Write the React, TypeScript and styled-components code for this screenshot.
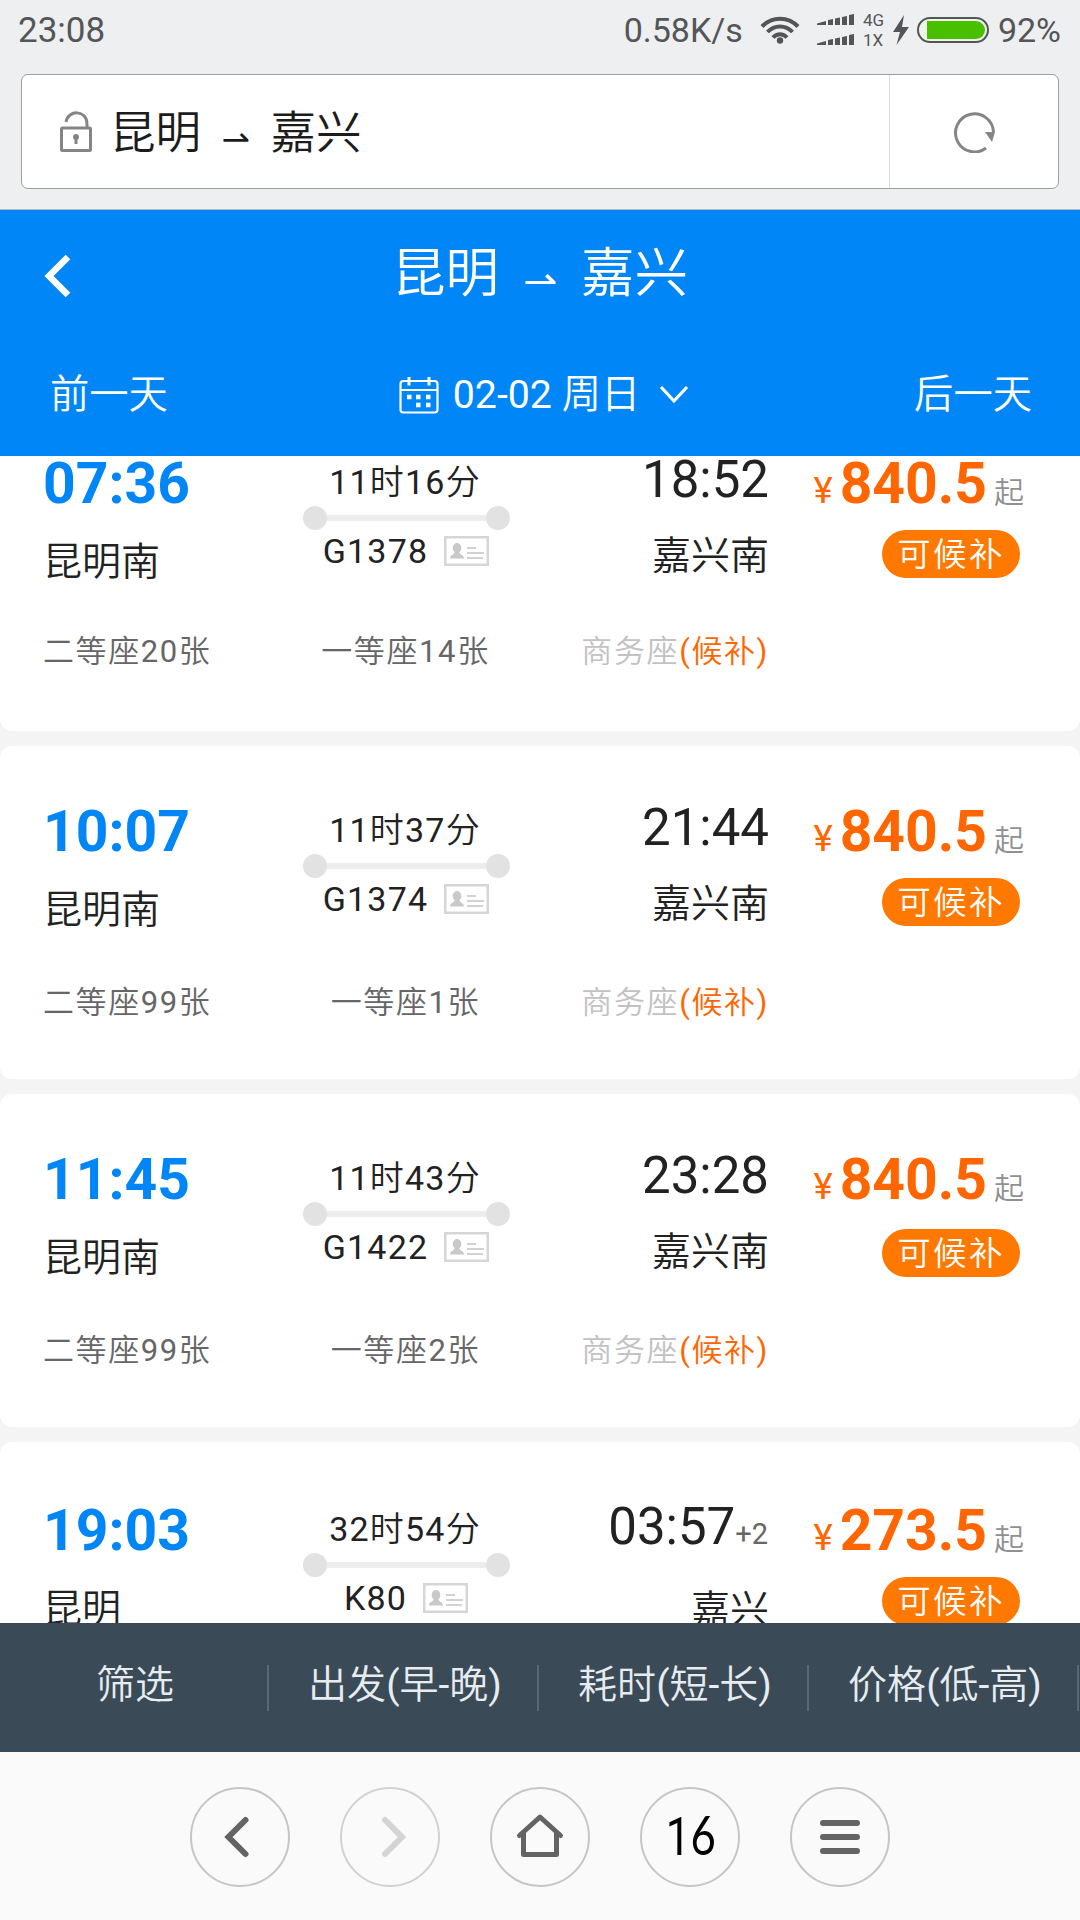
import React from "react";
import styled, { createGlobalStyle } from "styled-components";

const sans = `Roboto, "Noto Sans CJK SC", sans-serif`;

const GlobalStyle = createGlobalStyle`
  * { box-sizing: border-box; }
  body { margin: 0; background: #f4f4f4; font-family: ${sans}; color: #222; }
`;

const Screen = styled.div`
  width: 1080px;
  height: 1920px;
  display: flex;
  flex-direction: column;
  overflow: hidden;
`;

/* Chinese glyphs are set one step lighter than the Latin digits beside them. */
const Han = styled.span`
  font-weight: 350;
`;
const Mixed = ({ text }: { text: string }) => (
  <span>
    {text.split(/([\u4e00-\u9fff]+)/).filter(Boolean).map((part, i) =>
      /[\u4e00-\u9fff]/.test(part) ? <Han key={i}>{part}</Han> : part
    )}
  </span>
);

/* ---------- status bar ---------- */
const BrowserTop = styled.div`
  height: 210px;
  flex: none;
  background: #eeeff1;
  border-bottom: 1px solid #b4bac2;
  padding: 0 21px;
`;
const StatusBar = styled.div`
  height: 74px;
  display: flex;
  align-items: flex-start;
  padding-top: 10px;
  margin: 0 -2px 0 -3px;
  color: #545557;
`;
const StatusText = styled.span<{ $ml?: number; $size?: number }>`
  font-size: ${(p) => p.$size ?? 34}px;
  line-height: 41px;
  margin-left: ${(p) => p.$ml ?? 0}px;
  white-space: nowrap;
`;
const StatusRight = styled.div`
  margin-left: auto;
  display: flex;
  align-items: flex-start;
`;
const NetLabels = styled.div`
  display: flex;
  flex-direction: column;
  width: 30px;
  font-size: 17px;
  line-height: 20px;
`;

/* ---------- address bar ---------- */
const AddressBar = styled.div`
  height: 115px;
  display: flex;
  background: #fff;
  border: 1px solid #9b9d9f;
  border-radius: 7px;
`;
const Address = styled.div`
  flex: 1;
  display: flex;
  align-items: center;
  padding-left: 38px;
  font-size: 45.5px;
  line-height: 60px;
  color: #1c1c1c;
`;
const RefreshBox = styled.div`
  width: 169px;
  display: flex;
  align-items: center;
  justify-content: center;
  border-left: 1px solid #dcdcdc;
`;
const Route = styled.span`
  display: flex;
  align-items: flex-start;
  margin-left: 18px;
  padding-top: 5px;
  height: 65px;
`;
const Harpoon = styled.span<{ $size: number; $gap: number; $drop: number }>`
  font-family: "DejaVu Sans", sans-serif;
  font-size: ${(p) => p.$size}px;
  margin: ${(p) => p.$drop}px ${(p) => p.$gap}px 0;
`;

/* ---------- page header ---------- */
const Header = styled.header`
  height: 246px;
  flex: none;
  background: #0086f6;
  color: #fff;
  display: flex;
  flex-direction: column;
`;
const TitleRow = styled.div`
  height: 126px;
  display: grid;
  grid-template-columns: 90px 1fr 90px;
  align-items: center;
  font-size: 53.5px;
  line-height: 70px;
`;
const TitleText = styled.div`
  display: flex;
  justify-content: center;
  padding-top: 9px;
  font-weight: 350;
`;
const BackButton = styled.div`
  padding: 6px 0 0 44px;
  display: flex;
`;
const DateRow = styled.div`
  height: 120px;
  display: flex;
  align-items: center;
  justify-content: space-between;
  padding: 0 48px 2px 50px;
  font-size: 39.3px;
  line-height: 50px;
`;
const DatePick = styled.div`
  display: flex;
  align-items: center;
  margin-left: 6px;
`;
const DateLabel = styled.span`
  margin: 0 19px 0 14px;
`;

/* ---------- train list ---------- */
const List = styled.main`
  flex: 1;
  overflow: hidden;
  background: #f4f4f4;
`;
const Cards = styled.div`
  margin-top: -58px;
  display: flex;
  flex-direction: column;
  gap: 15px;
`;
const Card = styled.article<{ $shift: number }>`
  height: 333px;
  flex: none;
  background: #fff;
  border-radius: 12px;
  padding: ${(p) => 56 + p.$shift}px 56px 0 43px;
  display: flex;
  flex-direction: column;
`;
const Columns = styled.div`
  height: 130px;
  display: grid;
  grid-template-columns: 202px 320px 204px 1fr;
`;
const Col = styled.div<{ $align: string; $top?: number }>`
  display: flex;
  flex-direction: column;
  align-items: ${(p) => p.$align};
  padding-top: ${(p) => p.$top ?? 0}px;
  white-space: nowrap;
`;
const DepartTime = styled.span`
  font-size: 57px;
  font-weight: 700;
  line-height: 56px;
  color: #0086f6;
`;
const Station = styled.span<{ $mt: number }>`
  font-size: 39px;
  font-weight: 350;
  line-height: 46px;
  margin-top: ${(p) => p.$mt}px;
`;
const MidText = styled.span`
  font-size: 34px;
  letter-spacing: 1.2px;
  line-height: 40px;
`;
const Track = styled.div`
  width: 207px;
  height: 24px;
  display: flex;
  align-items: center;
  margin: 4px 0 1px 3px;
`;
const Dot = styled.i`
  width: 24px;
  height: 24px;
  border-radius: 50%;
  background: #e2e2e2;
`;
const Rail = styled.i`
  flex: 1;
  height: 6px;
  background: #ededed;
`;
const TrainNo = styled.div`
  display: flex;
  align-items: center;
  gap: 16px;
  padding-left: 2px;
`;
const ArriveTime = styled.span`
  font-size: 51px;
  line-height: 52px;
`;
const PlusDays = styled.small`
  font-size: 29px;
  color: #666;
  margin-right: 1px;
`;
const Price = styled.div`
  height: 56px;
  font-size: 57px;
  font-weight: 700;
  line-height: 56px;
  color: #ff6600;
`;
const Yen = styled.span`
  font-size: 36.5px;
  font-weight: 400;
  margin-right: 7px;
`;
const From = styled.span`
  font-size: 30px;
  font-weight: 350;
  color: #909090;
  margin-left: 7px;
`;
const Badge = styled.span<{ $mt: number }>`
  height: 48px;
  width: 138px;
  margin: ${(p) => p.$mt}px 4px 0 0;
  border-radius: 24px;
  background: #ff7800;
  color: #fff;
  font-size: 33.5px;
  font-weight: 350;
  letter-spacing: 2.3px;
  line-height: 49px;
  text-align: center;
`;
const Seats = styled.div<{ $mt: number }>`
  display: grid;
  grid-template-columns: 202px 321px 203px;
  margin-top: ${(p) => p.$mt}px;
  font-size: 31px;
  letter-spacing: 1.6px;
  line-height: 40px;
  color: #666;
  white-space: nowrap;
`;
const Seat = styled.span<{ $align: string }>`
  display: flex;
  justify-content: ${(p) => p.$align};
`;
const SoldOut = styled.span`
  color: #c2c2c2;
`;
const Waitlist = styled.span`
  color: #ff6600;
`;

/* ---------- sort bar ---------- */
const SortBar = styled.div`
  height: 129px;
  flex: none;
  display: grid;
  grid-template-columns: repeat(4, 270px);
  align-items: center;
  background: #3b4a57;
  color: #e6ecf0;
`;
const SortItem = styled.div`
  height: 46px;
  margin-right: 1px;
  padding-left: 3px;
  border-right: 2px solid #596874;
  text-align: center;
  font-size: 39px;
  line-height: 40px;
`;

/* ---------- browser toolbar ---------- */
const Toolbar = styled.nav`
  height: 168px;
  flex: none;
  display: flex;
  justify-content: center;
  gap: 50px;
  padding-top: 35px;
  background: #fafafa;
`;
const RoundButton = styled.div<{ $dim?: boolean }>`
  width: 100px;
  height: 100px;
  border: 2px solid ${(p) => (p.$dim ? "#d2d2d2" : "#c6c6c6")};
  border-radius: 50%;
  display: flex;
  align-items: center;
  justify-content: center;
`;
const TabCount = styled.span`
  font-size: 54px;
  line-height: 60px;
  color: #000;
  transform: scaleX(0.81);
  margin: -2px 0 0 2px;
`;
const LatoDigit = styled.span`
  font-family: Lato, sans-serif;
`;

/* ---------- icons ---------- */
const WifiIcon = styled.svg`
  margin: 5px 0 0 17px;
`;
const SignalIcon = styled.svg`
  margin: 4px 0 0 17px;
`;
const BoltIcon = styled.svg`
  margin-top: 5px;
`;
const BatteryIcon = styled.svg`
  margin: 7px 0 0 8px;
`;

const SignalBars = ({ y }: { y: number }) => (
  <g transform={`translate(0 ${y})`}>
    <path d="M0 11V9.500L9 7V11Z" />
    <path d="M11 11V6L16 5V11Z" />
    <path d="M18 11V4.500L23 3.500V11Z" />
    <path d="M25 11V3L30 2V11Z" />
    <path d="M32 11V1L37 0V11Z" />
  </g>
);

const IdCard = () => (
  <svg width="45" height="30" viewBox="0 0 45 30">
    <rect x="1.250" y="1.250" width="42.500" height="27.500" fill="#fff" stroke="#d6d6d6" strokeWidth="2.500" />
    <ellipse cx="13" cy="12" rx="4.300" ry="5" fill="#c9c9c9" />
    <path d="M6 22.500c0-4 4-3 5-7h4c1 4 5 3 5 7z" fill="#c9c9c9" />
    <path d="M23 12h9M23 17h17M23 22h16" stroke="#d2d2d2" strokeWidth="2.200" />
  </svg>
);

type Train = {
  depart: string; arrive: string; plus?: string; from: string; to: string;
  duration: string; no: string; price: string; second: string; first: string;
  shift: number; seatShift: number; badgeShift: number;
};

const trains: Train[] = [
  { depart: "07:36", arrive: "18:52", from: "昆明南", to: "嘉兴南", duration: "11时16分", no: "G1378", price: "840.5", second: "二等座20张", first: "一等座14张", shift: 0, seatShift: 0, badgeShift: 0 },
  { depart: "10:07", arrive: "21:44", from: "昆明南", to: "嘉兴南", duration: "11时37分", no: "G1374", price: "840.5", second: "二等座99张", first: "一等座1张", shift: 0, seatShift: 3, badgeShift: 0 },
  { depart: "11:45", arrive: "23:28", from: "昆明南", to: "嘉兴南", duration: "11时43分", no: "G1422", price: "840.5", second: "二等座99张", first: "一等座2张", shift: 0, seatShift: 3, badgeShift: 3 },
  { depart: "19:03", arrive: "03:57", plus: "+2", from: "昆明", to: "嘉兴", duration: "32时54分", no: "K80", price: "273.5", second: "", first: "", shift: 3, seatShift: 0, badgeShift: 0 },
];

const TrainCard = ({ t }: { t: Train }) => (
  <Card $shift={t.shift}>
    <Columns>
      <Col $align="flex-start" $top={2}>
        <DepartTime>{t.depart}</DepartTime>
        <Station $mt={27}>{t.from}</Station>
      </Col>
      <Col $align="center" $top={8}>
        <MidText><Mixed text={t.duration} /></MidText>
        <Track><Dot /><Rail /><Dot /></Track>
        <TrainNo><MidText>{t.no}</MidText><IdCard /></TrainNo>
      </Col>
      <Col $align="flex-end" $top={-2}>
        <ArriveTime>{t.arrive}{t.plus && <PlusDays>{t.plus}</PlusDays>}</ArriveTime>
        <Station $mt={27}>{t.to}</Station>
      </Col>
      <Col $align="flex-end" $top={2}>
        <Price><Yen>¥</Yen>{t.price}<From>起</From></Price>
        <Badge $mt={18 + t.badgeShift}>可候补</Badge>
      </Col>
    </Columns>
    {t.second && (
      <Seats $mt={48 + t.seatShift}>
        <Seat $align="flex-start"><Mixed text={t.second} /></Seat>
        <Seat $align="center"><Mixed text={t.first} /></Seat>
        <Seat $align="flex-end">
          <SoldOut><Mixed text="商务座" /></SoldOut>
          <Waitlist><Mixed text="(候补)" /></Waitlist>
        </Seat>
      </Seats>
    )}
  </Card>
);

export default function App() {
  return (
    <>
      <GlobalStyle />
      <Screen>
        <BrowserTop>
          <StatusBar>
            <StatusText $size={35}>23:08</StatusText>
            <StatusRight>
              <StatusText>0.58K/s</StatusText>
              <WifiIcon width="40" height="30" viewBox="0 0 40 30" fill="none" stroke="#545557" strokeWidth="4">
                <path d="M2 11.500C12 1 28 1 38 11.500" />
                <path d="M7.500 17C14.500 9.500 25.500 9.500 32.500 17" />
                <path d="M13 22.500C17 18 23 18 27 22.500" />
                <circle cx="20" cy="25.500" r="3.200" fill="#545557" stroke="none" />
              </WifiIcon>
              <SignalIcon width="46" height="32" fill="#545557">
                <SignalBars y={0} />
                <SignalBars y={20} />
              </SignalIcon>
              <NetLabels><span>4G</span><span>1X</span></NetLabels>
              <BoltIcon width="16" height="30" viewBox="0 0 16 30" fill="#545557">
                <path d="M11 0L0 17h7L3.500 30L16 12H9z" />
              </BoltIcon>
              <BatteryIcon width="72" height="26" viewBox="0 0 72 26">
                <rect x="1" y="1" width="70" height="24" rx="12" fill="#eef5ea" stroke="#545557" strokeWidth="2" />
                <path d="M10 4H59a9 9 0 0 1 0 18H10Z" fill="#48c000" />
              </BatteryIcon>
              <StatusText $ml={9}>92%</StatusText>
            </StatusRight>
          </StatusBar>
          <AddressBar>
            <Address>
              <svg width="32" height="41" viewBox="0 0 32 41" fill="none" stroke="#858585" strokeWidth="3">
                <rect x="1.500" y="17" width="29" height="22.500" rx="1" />
                <path d="M6 11C8 -1.500 27 -1.500 27 13V17" />
                <circle cx="16" cy="26" r="3" fill="#858585" stroke="none" />
                <path d="M16 26V33" />
              </svg>
              <Route><Han>昆明</Han><Harpoon $size={34} $gap={20.5} $drop={5}>⇀</Harpoon><Han>嘉兴</Han></Route>
            </Address>
            <RefreshBox>
              <svg width="42" height="42" viewBox="0 0 42 42" fill="none">
                <path d="M40.500 21A19 19 0 1 0 33 37" stroke="#858585" strokeWidth="3" />
                <path d="M32 21h10l-3 10z" fill="#858585" />
              </svg>
            </RefreshBox>
          </AddressBar>
        </BrowserTop>

        <Header>
          <TitleRow>
            <BackButton>
              <svg width="28" height="44" viewBox="0 0 28 44" fill="none" stroke="#fff" strokeWidth="6.500">
                <path d="M24 3L5 22L24 41" />
              </svg>
            </BackButton>
            <TitleText>昆明<Harpoon $size={41} $gap={24} $drop={7}>⇀</Harpoon>嘉兴</TitleText>
          </TitleRow>
          <DateRow>
            <Mixed text="前一天" />
            <DatePick>
              <svg width="40" height="37" viewBox="0 0 40 37" fill="none" stroke="#fff" strokeWidth="2.200">
                <rect x="1.500" y="4" width="37" height="31.500" rx="3" />
                <path d="M1.500 13H38.500" />
                <path d="M10 0V8.500M30 0V8.500" strokeWidth="3" />
                <path d="M8 20h4.500M17 20h4.500M27 20h4.500M17 28h4.500M27 28h4.500" strokeWidth="4.500" />
              </svg>
              <DateLabel><Mixed text="02-02 周日" /></DateLabel>
              <svg width="30" height="20" viewBox="0 0 30 20" fill="none" stroke="#fff" strokeWidth="3.200">
                <path d="M2 2L15 16L28 2" />
              </svg>
            </DatePick>
            <Mixed text="后一天" />
          </DateRow>
        </Header>

        <List>
          <Cards>
            {trains.map((t) => <TrainCard key={t.depart} t={t} />)}
          </Cards>
        </List>

        <SortBar>
          <SortItem><Mixed text="筛选" /></SortItem>
          <SortItem><Mixed text="出发(早-晚)" /></SortItem>
          <SortItem><Mixed text="耗时(短-长)" /></SortItem>
          <SortItem><Mixed text="价格(低-高)" /></SortItem>
        </SortBar>

        <Toolbar>
          <RoundButton>
            <svg width="60" height="60" viewBox="0 0 60 60" fill="none" stroke="#646464" strokeWidth="6" strokeLinecap="round">
              <path d="M35.500 13L18.500 30L35.500 47" />
            </svg>
          </RoundButton>
          <RoundButton $dim>
            <svg width="60" height="60" viewBox="0 0 60 60" fill="none" stroke="#d4d4d4" strokeWidth="6" strokeLinecap="round">
              <path d="M25 13L42 30L25 47" />
            </svg>
          </RoundButton>
          <RoundButton>
            <svg width="60" height="60" viewBox="0 0 60 60" fill="none" stroke="#646464" strokeWidth="5" strokeLinecap="round" strokeLinejoin="round">
              <path d="M9.500 28.500L30 10L50.500 28.500M13.500 26V47.500H46.500V26" />
            </svg>
          </RoundButton>
          <RoundButton><TabCount>1<LatoDigit>6</LatoDigit></TabCount></RoundButton>
          <RoundButton>
            <svg width="60" height="60" viewBox="0 0 60 60" fill="none" stroke="#646464" strokeWidth="6" strokeLinecap="round">
              <path d="M13 16H47M13 30H47M13 44H47" />
            </svg>
          </RoundButton>
        </Toolbar>
      </Screen>
    </>
  );
}
